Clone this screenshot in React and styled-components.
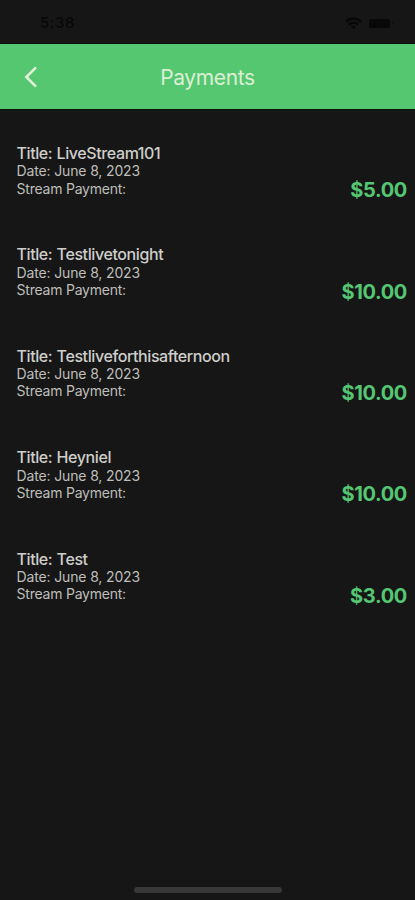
import React from 'react'
import styled, { createGlobalStyle } from 'styled-components'

const GlobalStyle = createGlobalStyle`
    * {
        box-sizing: border-box;
    }
    body {
        margin: 0;
        background: #161616;
        font-family: Inter, "Liberation Sans", sans-serif;
    }
`
const Screen = styled.div`
    display: flex;
    flex-direction: column;
    width: 100%;
    height: 900px;
    overflow: hidden;
    background: #161616;
`
const StatusBar = styled.div`
    display: flex;
    flex: none;
    justify-content: space-between;
    align-items: center;
    height: 44px;
    padding: 3px 20px 0 40px;
    border-bottom: 1px solid #06120a;
    color: #080808;
`
const Clock = styled.span`
    font-size: 15px;
    font-weight: 500;
    line-height: 18px;
    letter-spacing: 0.6px;
`
const StatusIcons = styled.div`
    display: flex;
    align-items: center;
    gap: 7px;
`
const Header = styled.header`
    display: grid;
    flex: none;
    grid-template-columns: 60px 1fr 60px;
    align-items: center;
    height: 66px;
    background: #55c771;
    border-bottom: 1px solid #06120a;
`
const BackButton = styled.button`
    display: flex;
    justify-content: center;
    padding: 0 0 0 2px;
    border: none;
    background: none;
    color: #e4f0d9;
`
const HeaderTitle = styled.h1`
    margin: 0;
    padding-top: 2px;
    text-align: center;
    color: #dcefd5;
    font-size: 21px;
    font-weight: 400;
    line-height: 26px;
    letter-spacing: -0.35px;
`
const PaymentList = styled.ul`
    flex: 1;
    margin: 0;
    padding: 33px 8px 0 16.6px;
    list-style: none;
`
const PaymentRow = styled.li`
    display: flex;
    justify-content: space-between;
    height: 101.4px;
`
const Title = styled.div`
    margin-bottom: -0.6px;
    color: #cececb;
    font-size: 16px;
    font-weight: 450;
    line-height: 20px;
    letter-spacing: -0.4px;
`
const Label = styled.span`
    margin-right: 0.6px;
    font-weight: 500;
    letter-spacing: -0.45px;
`
const Detail = styled.div`
    color: #bebeba;
    font-size: 14px;
    line-height: 17.2px;
    letter-spacing: ${props => props.$wide ? '-0.15px' : '-0.23px'};
`
const Amount = styled.div`
    margin-top: 35.3px;
    color: #55c673;
    font-size: 20px;
    font-weight: 700;
    line-height: 24px;
    letter-spacing: -0.35px;
`
const HomeIndicator = styled.div`
    flex: none;
    align-self: center;
    width: 148px;
    height: 6px;
    margin-bottom: 7px;
    border-radius: 3px;
    background: #383838;
`

const payments = [
    { title: 'LiveStream101', date: 'June 8, 2023', amount: '$5.00' },
    { title: 'Testlivetonight', date: 'June 8, 2023', amount: '$10.00' },
    { title: 'Testliveforthisafternoon', date: 'June 8, 2023', amount: '$10.00' },
    { title: 'Heyniel', date: 'June 8, 2023', amount: '$10.00' },
    { title: 'Test', date: 'June 8, 2023', amount: '$3.00' },
]

function WifiIcon() {
    return (
        <svg width="17" height="13" viewBox="0 0 17 13" fill="none" stroke="currentColor" strokeWidth="2.3">
            <path d="M1 4.6a10.6 10.6 0 0 1 15 0" />
            <path d="M3.8 7.6a6.6 6.6 0 0 1 9.4 0" />
            <path d="M8.5 12.5 6 9.8a3.6 3.6 0 0 1 5 0Z" fill="currentColor" stroke="none" />
        </svg>
    )
}

function BatteryIcon() {
    return (
        <svg width="26" height="9" viewBox="0 0 26 9" fill="currentColor">
            <rect width="21" height="9" rx="1.5" />
            <path d="M23 3c2 .4 2 2.600 0 3Z" opacity="0.5" />
        </svg>
    )
}

function Payment({ title, date, amount }) {
    return (
        <PaymentRow>
            <div>
                <Title><Label>Title:</Label> {title}</Title>
                <Detail $wide>Date: {date}</Detail>
                <Detail>Stream Payment:</Detail>
            </div>
            <Amount>{amount}</Amount>
        </PaymentRow>
    )
}

function App() {
    return (
        <Screen>
            <GlobalStyle />
            <StatusBar>
                <Clock>5:38</Clock>
                <StatusIcons>
                    <WifiIcon />
                    <BatteryIcon />
                </StatusIcons>
            </StatusBar>
            <Header>
                <BackButton aria-label="Back">
                    <svg width="14" height="24" viewBox="0 0 14 24" fill="none" stroke="currentColor" strokeWidth="2.5">
                        <path d="M12 2.300 2.300 12 12 21.700" />
                    </svg>
                </BackButton>
                <HeaderTitle>Payments</HeaderTitle>
            </Header>
            <PaymentList>
                {payments.map(payment => <Payment key={payment.title} {...payment} />)}
            </PaymentList>
            <HomeIndicator />
        </Screen>
    )
}

export default App
